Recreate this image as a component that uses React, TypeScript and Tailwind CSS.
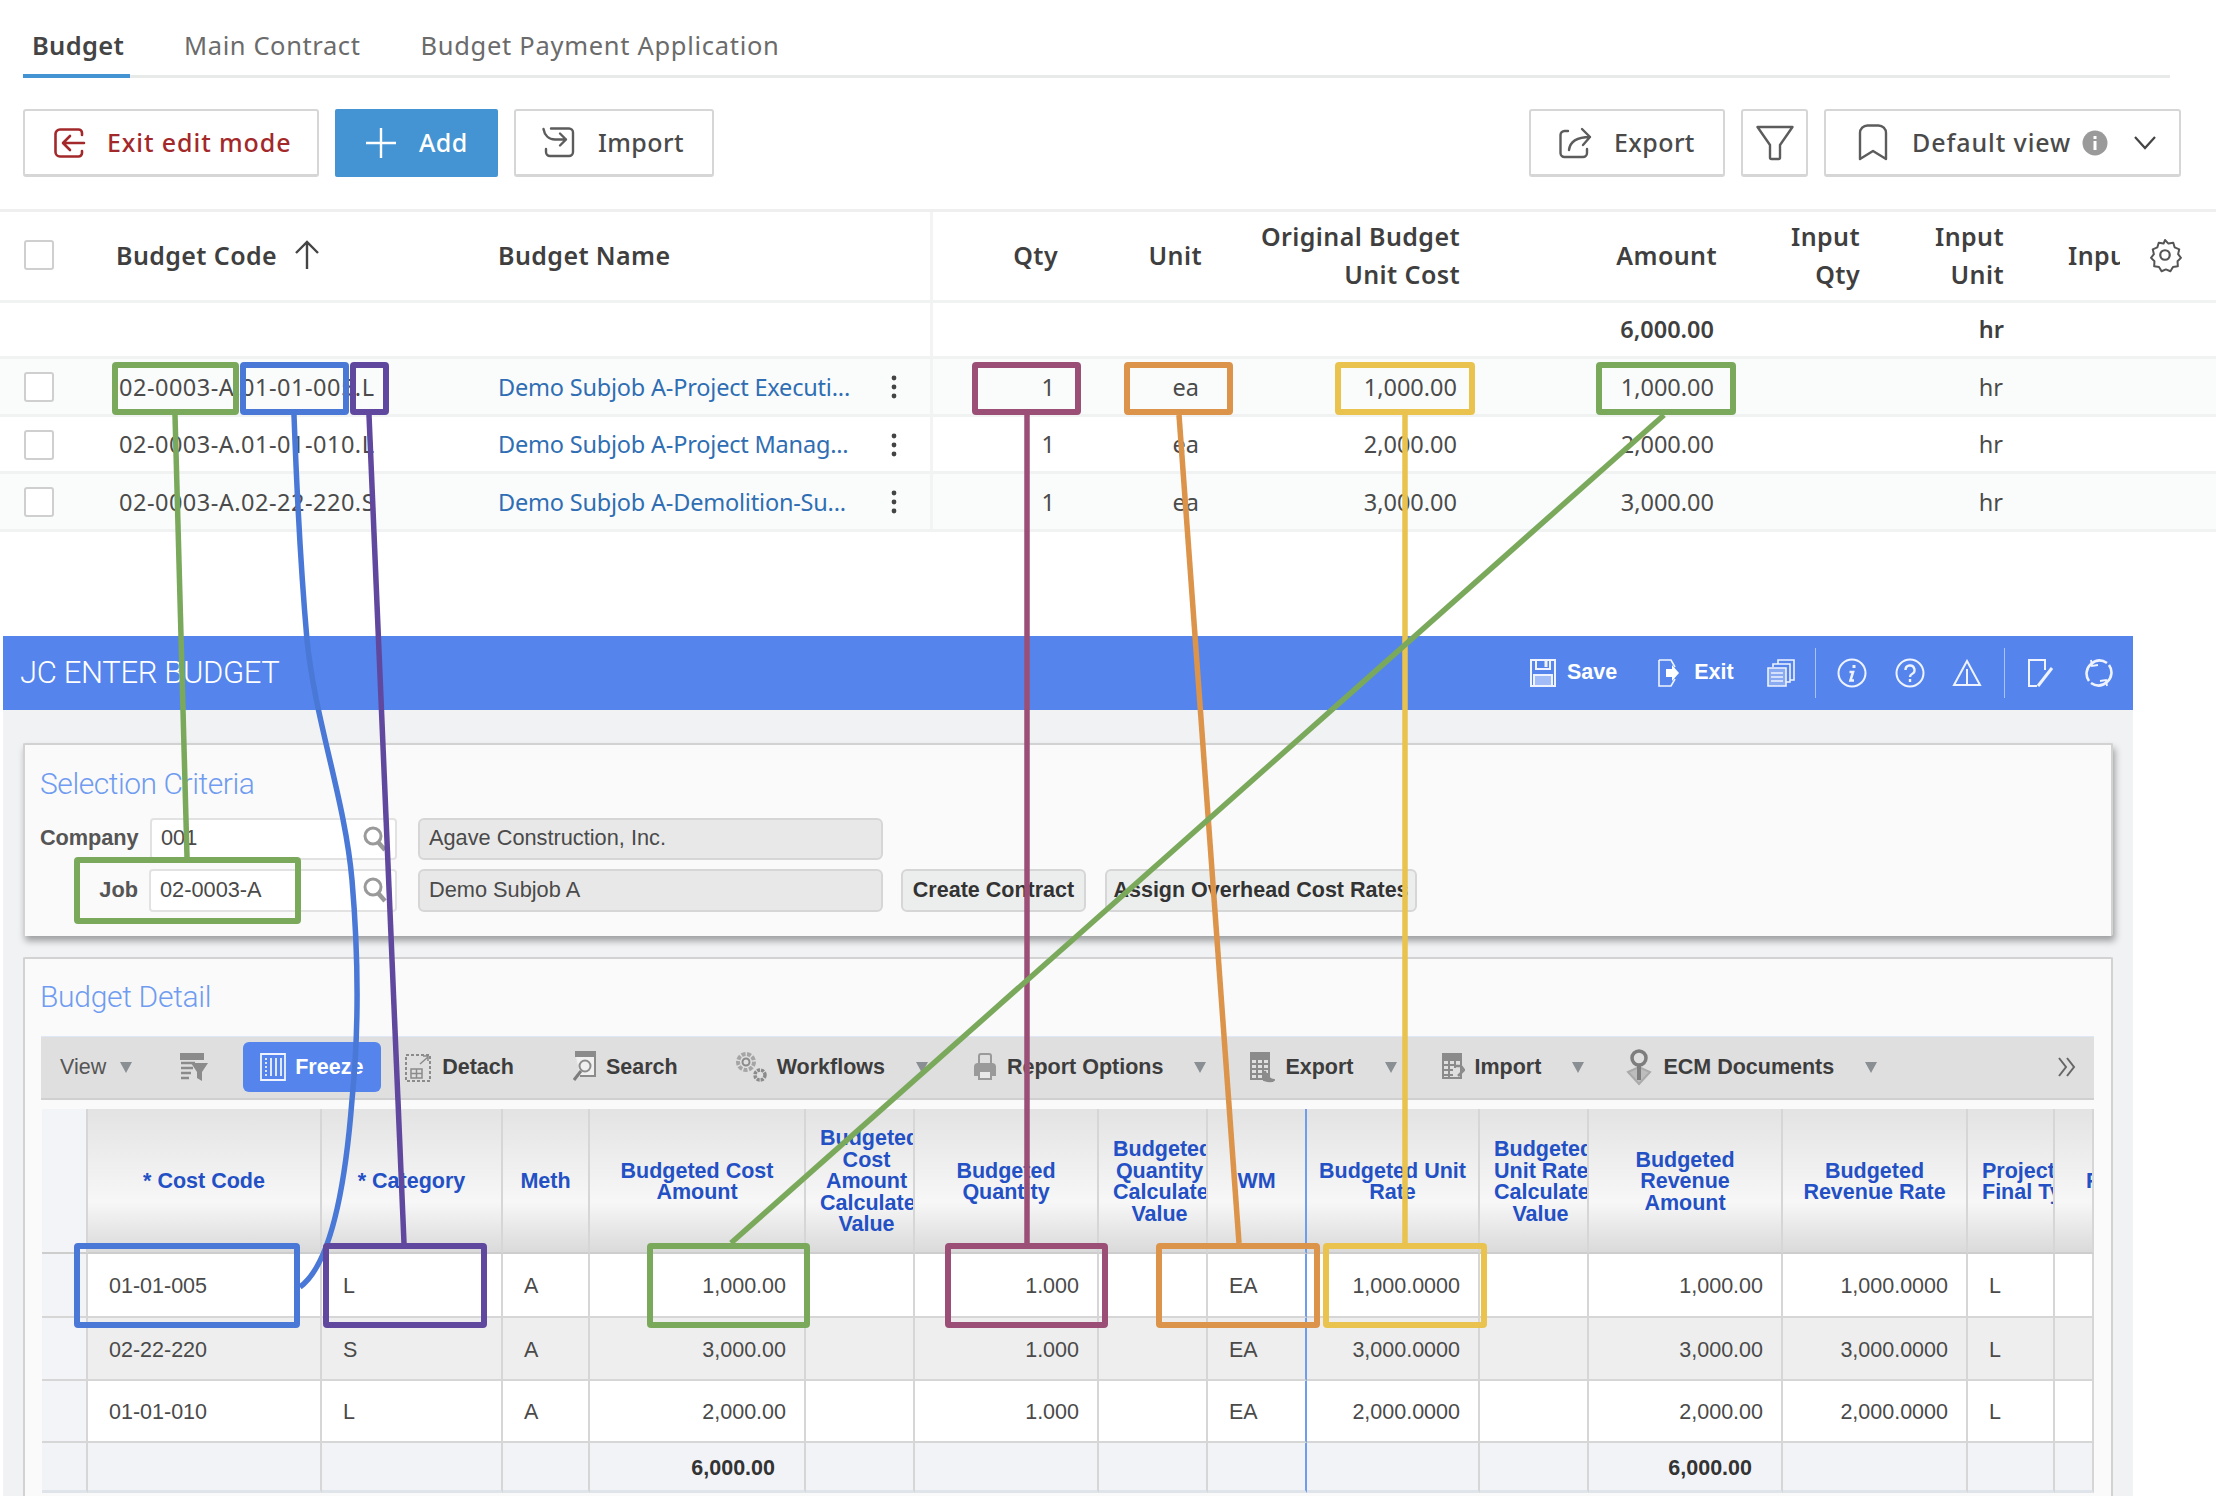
import React from "react";

const LIB = "font-['Liberation_Sans',Arial,sans-serif]";

function Btn({ className, children }: { className: string; children: React.ReactNode }) {
  return (
    <div className={"flex h-[68px] items-center rounded-[3px] border-2 border-[#d6d6d6] border-b-[3px] bg-white text-[25px] font-medium tracking-[0.4px] text-[#4a4a4a] " + className}>
      {children}
    </div>
  );
}

const RIGHT_W = ["w-[125px]", "w-[144px]", "w-[258px]", "w-[257px]", "w-[143px]", "w-[144px]"];

function TopRow({ bg, code, name, vals }: { bg: string; code: string; name: string; vals: string[] }) {
  return (
    <div className={"flex h-[57.5px] border-b-[3px] border-[#f1f2f2] text-[23.5px] text-[#4b4b4b] " + bg}>
      <div className="flex w-[933px] shrink-0 items-center border-r-[3px] border-[#f3f3f3] pt-[2px]">
        <div className="w-[116px] pl-[24px]">
          <div className="h-[30px] w-[30px] rounded-[3px] border-2 border-[#cfcfcf] bg-white" />
        </div>
        <div className="w-[260px] overflow-hidden whitespace-nowrap pl-[3px] tracking-[0.5px]">{code}</div>
        <div className="ml-[122px] w-[356px] whitespace-nowrap tracking-[-0.2px] text-[#2f6eb3]">{name}</div>
        <Kebab />
      </div>
      {vals.map((v, i) => (
        <div key={i} className={"flex items-center justify-end pt-[2px] " + (i === 5 ? "pr-[1px] " : "pr-[3px] ") + RIGHT_W[i]}>{v}</div>
      ))}
    </div>
  );
}

function Kebab() {
  return (
    <svg width="8" height="24" viewBox="0 0 8 24" className="ml-[36px]" fill="#444">
      <circle cx="4" cy="3" r="2.4" /><circle cx="4" cy="12" r="2.4" /><circle cx="4" cy="21" r="2.4" />
    </svg>
  );
}

function Caret({ className = "" }: { className?: string }) {
  return (
    <svg width="12" height="11" viewBox="0 0 12 11" className={className}>
      <path d="M0 0H12L6 11Z" fill="#8a8f94" />
    </svg>
  );
}

function Search() {
  return (
    <svg width="26" height="28" viewBox="0 0 26 28" fill="none" stroke="#9a9a9a" strokeWidth="3">
      <circle cx="11" cy="11" r="8" /><path d="M16 17l7 8" strokeWidth="4.5" />
    </svg>
  );
}

const gi = { fill: "none", stroke: "#8b8b8b", strokeWidth: 2 } as const;
const wi = { fill: "none", stroke: "#eef3ff", strokeWidth: 2 } as const;

const COLS = "grid grid-cols-[46px_234px_181px_87px_216px_109px_184px_109px_99px_173px_109px_194px_185px_87px_39px] grid-rows-[145px_64px_63px_62px_50px]";

const HEADS: React.ReactNode[] = [
  "",
  "* Cost Code",
  "* Category",
  "Meth",
  <>Budgeted Cost<br />Amount</>,
  <>Budgeted<br />Cost<br />Amount<br />Calculated<br />Value</>,
  <>Budgeted<br />Quantity</>,
  <>Budgeted<br />Quantity<br />Calculated<br />Value</>,
  "WM",
  <>Budgeted Unit<br />Rate</>,
  <>Budgeted<br />Unit Rate<br />Calculated<br />Value</>,
  <>Budgeted<br />Revenue<br />Amount</>,
  <>Budgeted<br />Revenue Rate</>,
  <>Project<br />Final Type</>,
  "",
];

const ROWS: string[][] = [
  ["", "01-01-005", "L", "A", "1,000.00", "", "1.000", "", "EA", "1,000.0000", "", "1,000.00", "1,000.0000", "L", ""],
  ["", "02-22-220", "S", "A", "3,000.00", "", "1.000", "", "EA", "3,000.0000", "", "3,000.00", "3,000.0000", "L", ""],
  ["", "01-01-010", "L", "A", "2,000.00", "", "1.000", "", "EA", "2,000.0000", "", "2,000.00", "2,000.0000", "L", ""],
];
const RIGHT_ALIGNED = [4, 5, 6, 7, 9, 10, 11, 12];
const CLIPPED_HEAD = [5, 7, 10, 13];

function cellBorder(i: number) {
  return i === 8 ? "border-r-2 border-r-[#6f9cec]" : "border-r-2 border-r-[#d6d6d6]";
}

const BOXES: [string, number, number, number, number][] = [
  ["#7aa95c", 112, 362, 239, 415],
  ["#4a78d6", 240, 362, 349, 415],
  ["#60489e", 350, 362, 389, 415],
  ["#9b4f76", 972, 362, 1081, 415],
  ["#dc934a", 1124, 362, 1233, 415],
  ["#e9c34e", 1335, 362, 1475, 415],
  ["#7aa95c", 1596, 362, 1736, 415],
  ["#7aa95c", 74, 857, 301, 924],
  ["#4a78d6", 74, 1243, 300, 1328],
  ["#60489e", 323, 1243, 487, 1328],
  ["#7aa95c", 647, 1243, 810, 1328],
  ["#9b4f76", 945, 1243, 1108, 1328],
  ["#dc934a", 1156, 1243, 1320, 1328],
  ["#e9c34e", 1323, 1243, 1487, 1328],
];

function TbItem({ ml, icon, label, caret, capMl }: { ml: string; icon: React.ReactNode; label: string; caret?: boolean; capMl?: string }) {
  return (
    <>
      <div className={"flex items-center gap-[10px] " + ml}>
        {icon}
        <span className="whitespace-nowrap pt-[1px] text-[#3d3d3d]">{label}</span>
      </div>
      {caret && <Caret className={capMl} />}
    </>
  );
}

export default function App() {
  return (
    <div className="relative h-[1496px] w-[2216px] overflow-hidden bg-white font-['Noto_Sans','Open_Sans',sans-serif]">
      {/* tabs */}
      <div className="ml-[23px] mr-[46px] flex h-[78px] items-end border-b-[3px] border-[#e8e9e9]">
        <div className="relative -mb-[3px] h-[78px] w-[107px] border-b-[4px] border-[#4494d3] pl-[9px] pt-[26px] text-[25.5px] font-semibold leading-[38px] tracking-[0.3px] text-[#444]">Budget</div>
        <div className="ml-[54px] h-[75px] pt-[26px] text-[25.5px] leading-[38px] tracking-[0.6px] text-[#6b6b6b]">Main Contract</div>
        <div className="ml-[60px] h-[75px] pt-[26px] text-[25.5px] leading-[38px] tracking-[0.7px] text-[#6b6b6b]">Budget Payment Application</div>
      </div>

      {/* action bar */}
      <div className="mt-[31px] flex h-[68px] justify-between pl-[23px] pr-[35px]">
        <div className="flex gap-[16px]">
          <Btn className="w-[296px] pl-[29px]">
            <svg width="32" height="30" viewBox="0 0 32 30" fill="none" stroke="#a3282a" strokeWidth="2.6" strokeLinecap="round" strokeLinejoin="round">
              <path d="M28 7V5a3.500 3.500 0 0 0-3.500-3.500H6A4.500 4.500 0 0 0 1.500 6v18A4.500 4.500 0 0 0 6 28.500h18.500A3.500 3.500 0 0 0 28 25v-2" />
              <path d="M30 15H10M16 8l-7 7 7 7" />
            </svg>
            <span className="ml-[21px] tracking-[0.9px] text-[#a3282a]">Exit edit mode</span>
          </Btn>
          <div className="flex h-[68px] w-[163px] items-center rounded-[2px] bg-[#4494d3] pl-[30px] text-[25px] font-medium tracking-[0.4px] text-white">
            <svg width="32" height="32" viewBox="0 0 32 32" stroke="#fff" strokeWidth="2.4"><path d="M16 1v30M1 16h30" /></svg>
            <span className="ml-[22px]">Add</span>
          </div>
          <Btn className="w-[200px] pl-[26px]">
            <svg width="33" height="31" viewBox="0 0 33 31" fill="none" stroke="#5c5c5c" strokeWidth="2.4" strokeLinecap="round" strokeLinejoin="round">
              <path d="M1.500 2C2.500 8 6.500 12.500 13 12.500H24M18 6.500l6 6-6 6" />
              <path d="M9 1.500H27a4 4 0 0 1 4 4V25a4 4 0 0 1-4 4H8a4 4 0 0 1-4-4v-3" />
            </svg>
            <span className="ml-[23px]">Import</span>
          </Btn>
        </div>
        <div className="flex gap-[16px]">
          <Btn className="w-[196px] pl-[27px]">
            <svg width="34" height="32" viewBox="0 0 34 32" fill="none" stroke="#5c5c5c" strokeWidth="2.4" strokeLinecap="round" strokeLinejoin="round">
              <path d="M10 4H6.500a4 4 0 0 0-4 4v18a4 4 0 0 0 4 4H25a4 4 0 0 0 4-4v-4" />
              <path d="M11 23c1-8 8-13 21-13M24 2l8 8-7 8" />
            </svg>
            <span className="ml-[22px]">Export</span>
          </Btn>
          <Btn className="w-[67px] justify-center">
            <svg width="38" height="36" viewBox="0 0 38 36" fill="none" stroke="#5c5c5c" strokeWidth="2.4" strokeLinejoin="round">
              <path d="M1.500 2h35L24 20v12.500a1.500 1.500 0 0 1-1.500 1.500h-7a1.500 1.500 0 0 1-1.500-1.500V20Z" />
            </svg>
          </Btn>
          <Btn className="w-[357px] pl-[32px]">
            <svg width="30" height="38" viewBox="0 0 30 38" fill="none" stroke="#5c5c5c" strokeWidth="2.4" strokeLinejoin="round">
              <path d="M2 35V9a7.500 7.500 0 0 1 7.500-7.500h11A7.500 7.500 0 0 1 28 9v26l-13-8Z" />
            </svg>
            <span className="ml-[24px] tracking-[0.9px]">Default view</span>
            <svg width="26" height="26" viewBox="0 0 26 26" className="ml-[11px]">
              <circle cx="13" cy="13" r="12.500" fill="#9a9a9a" />
              <rect x="11.500" y="11" width="3" height="9" fill="#fff" /><rect x="11.500" y="6" width="3" height="3" fill="#fff" />
            </svg>
            <svg width="24" height="16" viewBox="0 0 24 16" fill="none" stroke="#444" strokeWidth="2.2" className="ml-[25px]"><path d="M2 2l10 11L22 2" /></svg>
          </Btn>
        </div>
      </div>

      {/* budget table */}
      <div className="mt-[32px] border-t-[3px] border-[#efefef]">
        <div className="flex h-[91px] border-b-[3px] border-[#f1f2f2] pb-[2px] text-[25px] font-semibold leading-[38px] tracking-[0.4px] text-[#3f3f3f]">
          <div className="-mb-[2px] flex w-[933px] shrink-0 items-center border-r-[3px] border-[#f3f3f3] pb-[2px]">
            <div className="w-[116px] pl-[24px]">
              <div className="h-[30px] w-[30px] rounded-[3px] border-2 border-[#cfcfcf] bg-white" />
            </div>
            <span>Budget Code</span>
            <svg width="26" height="30" viewBox="0 0 26 30" fill="none" stroke="#444" strokeWidth="2.4" className="ml-[17px]"><path d="M13 29V2M2 13 13 2l11 11" /></svg>
            <span className="ml-[178px]">Budget Name</span>
          </div>
          <div className="flex w-[125px] items-center justify-end">Qty</div>
          <div className="flex w-[144px] items-center justify-end">Unit</div>
          <div className="flex w-[258px] items-center justify-end text-right">Original Budget<br />Unit Cost</div>
          <div className="flex w-[257px] items-center justify-end">Amount</div>
          <div className="flex w-[143px] items-center justify-end text-right">Input<br />Qty</div>
          <div className="flex w-[144px] items-center justify-end text-right">Input<br />Unit</div>
          <div className="ml-[64px] flex w-[52px] items-center overflow-hidden">Input</div>
          <svg width="38" height="38" viewBox="0 0 24 24" fill="none" stroke="#555" strokeWidth="1.400" strokeLinejoin="round" className="ml-[26px] self-center">
            <path d="M12 1.500l2.400 2.500 3.400-.6 1 3.300 3.200 1.300-.8 3.400 2 2.600-2.400 2.400.2 3.500-3.400.5-1.800 3-3.200-1.300-3 1.300-1.800-3-3.400-.5.2-3.500-2.400-2.400 2-2.600-.8-3.400 3.200-1.300 1-3.300 3.400.6Z" transform="translate(1.200 1.200) scale(0.9)" />
            <circle cx="12" cy="12" r="3" />
          </svg>
        </div>
        <div className="flex h-[56px] border-b-[3px] border-[#f1f2f2] text-[23.5px] text-[#3f3f3f]">
          <div className="w-[933px] shrink-0 border-r-[3px] border-[#f3f3f3]" />
          <div className="flex w-[784px] items-center justify-end pr-[3px] font-semibold">6,000.00</div>
          <div className="flex w-[287px] items-center justify-end font-semibold">hr</div>
        </div>
        <TopRow bg="bg-[#fafcfc]" code="02-0003-A.01-01-005.L" name="Demo Subjob A-Project Executi..." vals={["1", "ea", "1,000.00", "1,000.00", "", "hr"]} />
        <TopRow bg="bg-white" code="02-0003-A.01-01-010.L" name="Demo Subjob A-Project Manag..." vals={["1", "ea", "2,000.00", "2,000.00", "", "hr"]} />
        <TopRow bg="bg-[#fafcfc]" code="02-0003-A.02-22-220.S" name="Demo Subjob A-Demolition-Su..." vals={["1", "ea", "3,000.00", "3,000.00", "", "hr"]} />
      </div>

      {/* JC Enter Budget window */}
      <div className={"ml-[3px] mt-[104px] w-[2130px] " + LIB}>
        <div className="flex h-[74px] items-center bg-[#5585ec] text-[21.5px] font-bold text-white">
          <span className="ml-[17px] w-[1509px] pt-[1px] font-['Roboto',sans-serif] text-[31px] font-light tracking-[-0.35px]">JC ENTER BUDGET</span>
          <svg width="28" height="30" viewBox="0 0 28 30" {...wi}>
            <path d="M2 2h24v26H2Z" /><path d="M7 2v9h14V2" /><path d="M17 3v6" strokeWidth="3" /><path d="M5 17h18v11H5Z" fill="#eef3ff" fillOpacity="0.5" />
          </svg>
          <span className="ml-[10px]">Save</span>
          <svg width="24" height="30" viewBox="0 0 24 30" className="ml-[40px]" {...wi}>
            <path d="M2 2h12l4 7M2 2v26h12l4-7" strokeWidth="1.600" /><path d="M9 11h6V7l7 8-7 8v-4H9Z" fill="#fff" stroke="none" />
          </svg>
          <span className="ml-[13px]">Exit</span>
          <svg width="30" height="30" viewBox="0 0 30 30" className="ml-[32px]" {...wi} strokeWidth="1.600">
            <path d="M12 6V2h16v20h-4" /><path d="M7 9V6h17v18h-4" /><path d="M2 10h18v18H2Z" fill="#eef3ff" fillOpacity="0.35" /><path d="M5 15h12M5 19h12M5 23h12" />
          </svg>
          <div className="ml-[19px] h-[50px] w-[1px] bg-[#a8c2f5]" />
          <svg width="30" height="30" viewBox="0 0 30 30" className="ml-[21px]" {...wi}>
            <circle cx="15" cy="15" r="13.500" /><path d="M17 7v3" strokeWidth="3" /><path d="M12.500 14H16L13.500 22.500H17" strokeWidth="2.600" />
          </svg>
          <svg width="30" height="30" viewBox="0 0 30 30" className="ml-[28px]" {...wi}>
            <circle cx="15" cy="15" r="13.500" /><path d="M10.500 12a4.500 4.500 0 1 1 6.500 4c-1.500.8-2 1.500-2 3M15 21v3" strokeWidth="2.400" />
          </svg>
          <svg width="30" height="28" viewBox="0 0 30 28" className="ml-[27px]" {...wi}>
            <path d="M15 2l13 24H2Z" /><path d="M15 10v15" />
          </svg>
          <div className="ml-[22px] h-[50px] w-[1px] bg-[#a8c2f5]" />
          <svg width="28" height="30" viewBox="0 0 28 30" className="ml-[22px]" {...wi}>
            <path d="M18 12V2H2v26h8" /><path d="M11 28 25 10" strokeWidth="3" />
          </svg>
          <svg width="32" height="30" viewBox="0 0 32 30" className="ml-[28px]" fill="none" stroke="#eef3ff" strokeWidth="2.600">
            <path d="M6 23a12.500 12.500 0 0 1 2-17c5-4.500 11-4.500 16-1M26 7a12.500 12.500 0 0 1-2 17c-5 4.500-11 4.500-16 1" />
            <path d="M8 2l1 6 6-1M24 28l-1-6-6 1" strokeWidth="1.800" />
          </svg>
        </div>

        <div className="h-[790px] bg-[#f1f2f4] pt-[33px]">
          {/* selection criteria */}
          <div className="mx-[20px] h-[193px] rounded-[2px] border-2 border-[#d2d2d2] border-b-0 bg-[#fafafa] pl-[15px] pt-[18px] shadow-[2px_5px_7px_rgba(0,0,0,0.35)]">
            <div className="h-[40px] pt-[1px] font-['Roboto',sans-serif] text-[30px] font-light leading-[40px] tracking-[-0.45px] text-[#6f9cf0]">Selection Criteria</div>
            <div className="mt-[15px] flex h-[42px] items-center text-[21.75px] text-[#4a4a4a]">
              <div className="w-[110px] font-bold tracking-[-0.1px] text-[#555]">Company</div>
              <div className="flex h-[42px] w-[247px] items-center justify-between rounded-[4px] border-2 border-[#e2e2e2] bg-white pl-[9px] pr-[7px]">
                <span>001</span><Search />
              </div>
              <div className="ml-[21px] flex h-[42px] w-[465px] items-center rounded-[6px] border-2 border-[#d6d6d6] bg-[#e8e8e8] pl-[9px]">Agave Construction, Inc.</div>
            </div>
            <div className="mt-[9px] flex h-[43px] items-center text-[21.75px] text-[#4a4a4a]">
              <div className="w-[109px] pr-[11px] text-right font-bold text-[#555]">Job</div>
              <div className="flex h-[43px] w-[248px] items-center justify-between rounded-[4px] border-2 border-[#e2e2e2] bg-white pl-[9px] pr-[7px]">
                <span>02-0003-A</span><Search />
              </div>
              <div className="ml-[21px] flex h-[43px] w-[465px] items-center rounded-[6px] border-2 border-[#d6d6d6] bg-[#e8e8e8] pl-[9px]">Demo Subjob A</div>
              <div className="ml-[18px] flex h-[43px] w-[185px] items-center justify-center rounded-[6px] border-2 border-[#d6d6d6] bg-[#eceeee] text-[21.500px] font-bold text-[#333]">Create Contract</div>
              <div className="ml-[19px] flex h-[43px] w-[312px] items-center justify-center rounded-[6px] border-2 border-[#d6d6d6] bg-[#eceeee] text-[21.500px] font-bold text-[#333]">Assign Overhead Cost Rates</div>
            </div>
          </div>

          {/* budget detail */}
          <div className="mx-[20px] mt-[21px] h-[560px] rounded-[2px] border-2 border-[#d2d2d2] border-b-0 bg-[#fafafa] pt-[18px]">
            <div className="h-[40px] pl-[15px] font-['Roboto',sans-serif] text-[30px] font-light leading-[40px] tracking-[-0.3px] text-[#6f9cf0]">Budget Detail</div>
            <div className="ml-[16px] mt-[19px] flex h-[64px] w-[2053px] items-center border-t border-b-2 border-t-[#dfe6f5] border-b-[#d0d0d0] bg-[#dfdfdf] text-[21.5px] font-bold">
              <span className="ml-[19px] pt-[1px] font-normal text-[#555]">View</span>
              <Caret className="ml-[14px]" />
              <svg width="30" height="32" viewBox="0 0 30 32" className="ml-[47px]">
                <path d="M1 2h24v7H1Z" fill="#8b8b8b" /><path d="M2 12h14M2 17h12M2 22h10M2 27h8" stroke="#8b8b8b" strokeWidth="2.500" />
                <path d="M12 12h17l-6 9v9l-5-3v-6Z" fill="#8b8b8b" />
              </svg>
              <div className="ml-[34px] flex h-[50px] w-[138px] items-center rounded-[6px] bg-[#5585ec] pl-[17px] text-white">
                <svg width="26" height="28" viewBox="0 0 26 28" fill="none" stroke="#eef3ff" strokeWidth="1.800">
                  <path d="M1 1h24v26H1Z" /><path d="M6 5v18" strokeDasharray="2 2" /><path d="M11 5v18M16 5v18M21 5v18" />
                </svg>
                <span className="ml-[9px] pt-[1px]">Freeze</span>
              </div>
              <TbItem ml="ml-[23px]" label="Detach" icon={
                <svg width="28" height="32" viewBox="0 0 28 32" {...gi}>
                  <path d="M2 4h24v26H2Z" strokeDasharray="3 2" /><path d="M7 18h11v9H7ZM7 22.500h11M12.500 18v9" strokeWidth="1.500" /><path d="M16 13l8-7M19 5h5v5" strokeWidth="1.500" />
                </svg>} />
              <TbItem ml="ml-[58px]" label="Search" icon={
                <svg width="24" height="32" viewBox="0 0 24 32">
                  <path d="M3 1h20v24H8" fill="#f0f0f0" stroke="#8b8b8b" strokeWidth="2" /><path d="M3 1h20v5H3Z" fill="#8b8b8b" />
                  <circle cx="13" cy="15" r="5.500" fill="none" stroke="#8b8b8b" strokeWidth="2" /><path d="M9 20l-7 9" stroke="#7d7d7d" strokeWidth="3" />
                </svg>} />
              <TbItem ml="ml-[57px]" label="Workflows" caret capMl="ml-[31px]" icon={
                <svg width="32" height="32" viewBox="0 0 32 32" {...gi}>
                  <circle cx="11" cy="11" r="8" strokeDasharray="4 1.500" strokeWidth="4" stroke="#a5a5a5" /><circle cx="11" cy="11" r="3.500" /><circle cx="25" cy="24" r="5" strokeWidth="3.500" strokeDasharray="3 1" />
                </svg>} />
              <TbItem ml="ml-[45px]" label="Report Options" caret capMl="ml-[31px]" icon={
                <svg width="24" height="28" viewBox="0 0 24 28">
                  <path d="M6 10V3a2 2 0 0 1 2-2h8a2 2 0 0 1 2 2v7" fill="none" stroke="#9a9a9a" strokeWidth="2" />
                  <path d="M1 14a4 4 0 0 1 4-4h14a4 4 0 0 1 4 4v9H1Z" fill="#9a9a9a" /><path d="M6 18h12v8H6Z" fill="#e8e8e8" stroke="#9a9a9a" strokeWidth="2" />
                </svg>} />
              <TbItem ml="ml-[43px]" label="Export" caret capMl="ml-[31px]" icon={
                <svg width="26" height="32" viewBox="0 0 26 32" {...gi}>
                  <path d="M2 2h18v26H2Z" /><path d="M2 2h18v6H2Z" fill="#8b8b8b" /><path d="M2 13h18M2 18h18M2 23h18M8 8v20M14 8v20" />
                  <path d="M16 20c1 5 3 8 9 9-2 2-7 1-10 0Z" fill="#8b8b8b" />
                </svg>} />
              <TbItem ml="ml-[44px]" label="Import" caret capMl="ml-[31px]" icon={
                <svg width="24" height="30" viewBox="0 0 24 30" {...gi}>
                  <path d="M2 2h18v24H2Z" /><path d="M2 2h18v6H2Z" fill="#8b8b8b" /><path d="M2 13h12M2 18h10M2 23h10M8 8v18M14 8v8" />
                  <path d="M15 14h5l3 4-6 6" strokeWidth="2.500" />
                </svg>} />
              <TbItem ml="ml-[41px]" label="ECM Documents" caret capMl="ml-[31px]" icon={
                <svg width="28" height="38" viewBox="0 0 28 38" {...gi}>
                  <path d="M3 24l11-5 11 5-11 12Z" fill="#bdbdbd" stroke="#aaa" />
                  <circle cx="14" cy="10" r="7" strokeWidth="3.500" stroke="#7d7d7d" /><path d="M14 17v15" strokeWidth="4" stroke="#7d7d7d" />
                </svg>} />
              <svg width="20" height="20" viewBox="0 0 20 20" fill="none" stroke="#666" strokeWidth="2" className="ml-[180px]"><path d="M2 1l7 9-7 9M10 1l7 9-7 9" /></svg>
            </div>
            <div className={"ml-[17px] mt-[9px] w-[2052px] text-[21.5px] text-[#4a4a4a] " + COLS}>
              {HEADS.map((h, i) => (
                <div key={i} className={"overflow-hidden whitespace-nowrap border-b-2 border-b-[#cdcdcd] pt-[4px] text-[21.500px] font-bold leading-[21.500px] text-[#2350c4] " + (CLIPPED_HEAD.includes(i) ? "flex items-center pl-[14px] text-center " : "flex items-center justify-center text-center ") + cellBorder(i) + (i === 0 ? " bg-[#f2f4f8]" : " bg-linear-to-b from-[#e3e3e3] via-[#f7f7f7] via-65% to-[#dadada]")}>
                  {i === 14 ? <span className="w-full pl-[31px] text-left">F</span> : CLIPPED_HEAD.includes(i) ? <div className="min-w-0 flex-1">{h}</div> : h}
                </div>
              ))}
              {ROWS.map((r, ri) =>
                r.map((v, i) => (
                  <div key={ri + "-" + i} className={"flex items-center border-b-2 border-b-[#d6d6d6] pt-[4px] " + cellBorder(i) + " " + (RIGHT_ALIGNED.includes(i) ? "justify-end pr-[18px] " : "pl-[21px] ") + (i === 0 ? "bg-[#f2f4f8]" : ri === 1 ? "bg-[#eeeeee]" : "bg-white")}>
                    {v}
                  </div>
                ))
              )}
              {HEADS.map((_, i) => (
                <div key={"t" + i} className={"flex items-center justify-end border-b-[3px] border-b-[#dfe3ea] bg-[#f2f3f7] pr-[29px] pt-[4px] font-bold text-[#333] " + cellBorder(i)}>
                  {i === 4 || i === 11 ? "6,000.00" : ""}
                </div>
              ))}
            </div>
          </div>
        </div>
      </div>

      {/* annotation overlay */}
      <svg width="2216" height="1496" viewBox="0 0 2216 1496" fill="none" className="pointer-events-none absolute left-0 top-0" strokeWidth="5.500">
        <path d="M175 415 187 857" stroke="#7aa95c" />
        <path d="M294 415C296 470 300 560 307 640C315 720 345 800 352 880C358 950 360 1020 352 1100C345 1190 330 1265 300 1287" stroke="#4a78d6" />
        <path d="M369 415 404 1243" stroke="#60489e" />
        <path d="M1027 415V1243" stroke="#9b4f76" />
        <path d="M1179 415 1239 1243" stroke="#dc934a" />
        <path d="M1405 415V1243" stroke="#e9c34e" />
        <path d="M1664 415 731 1243" stroke="#7aa95c" />
        {BOXES.map(([c, x1, y1, x2, y2], i) => (
          <rect key={i} x={x1 + 3} y={y1 + 3} width={x2 - x1 - 6} height={y2 - y1 - 6} stroke={c} strokeWidth="6" rx="1" />
        ))}
      </svg>
    </div>
  );
}
